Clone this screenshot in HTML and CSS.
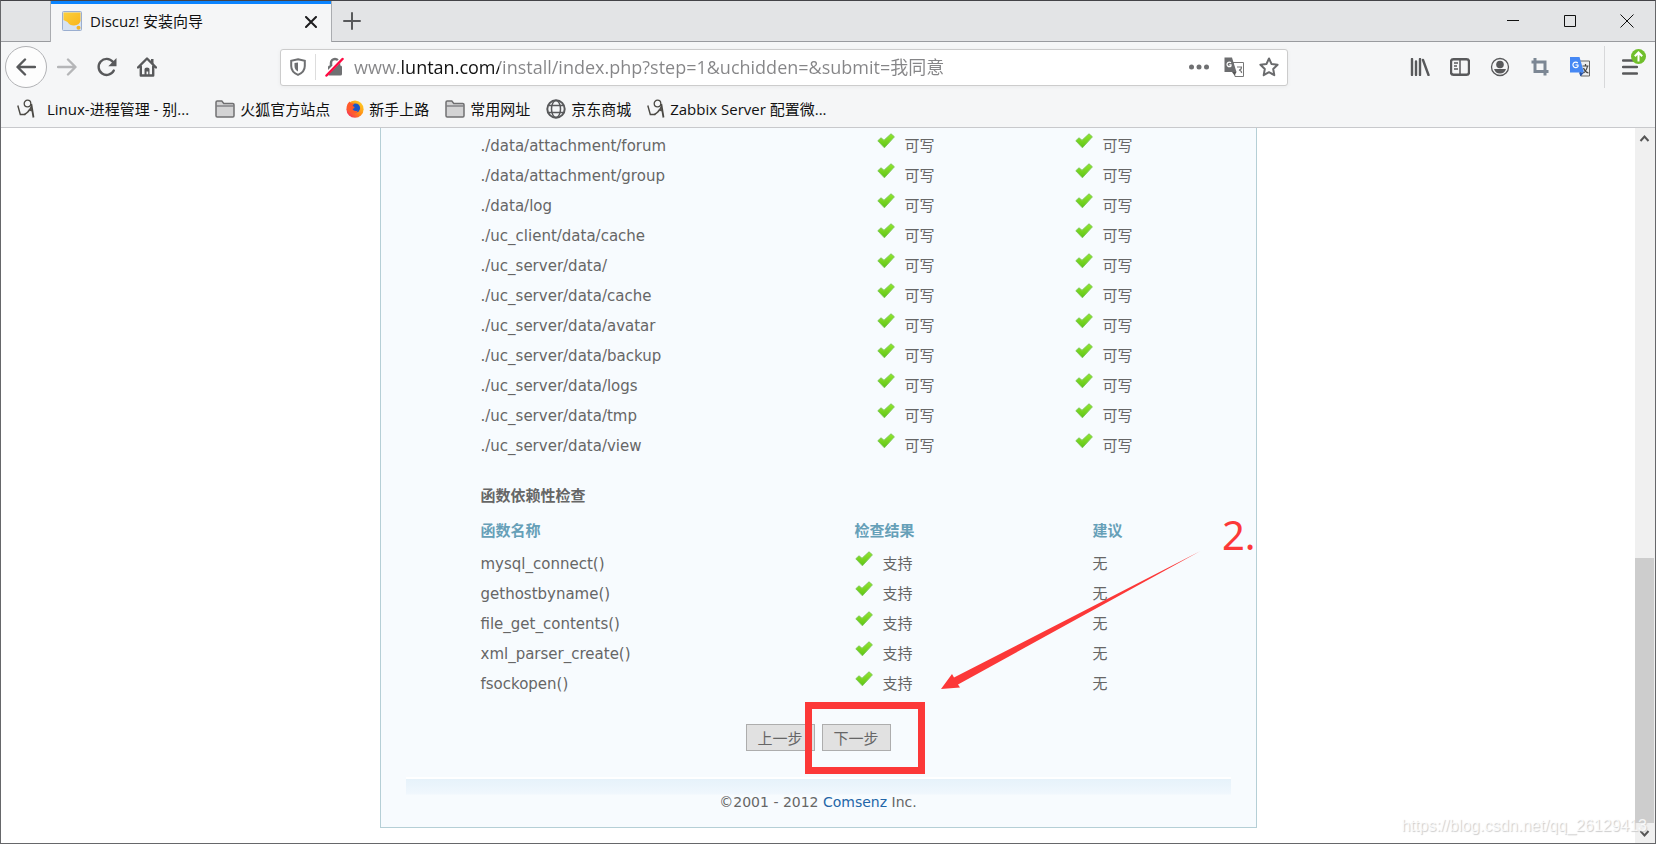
FILE: index.html
```html
<!DOCTYPE html>
<html lang="zh-CN">
<head>
<meta charset="utf-8">
<title>Discuz! 安装向导</title>
<link rel="stylesheet" href="styles.css">
</head>
<body>
<svg class="defs" width="0" height="0" aria-hidden="true">
  <defs>
    <linearGradient id="green" x1="0" y1="0" x2="0" y2="1"><stop offset="0" stop-color="#93e62c"/><stop offset="1" stop-color="#5fc418"/></linearGradient>
    <linearGradient id="gold" x1="0" y1="0" x2="1" y2="1"><stop offset="0" stop-color="#fbd03c"/><stop offset="1" stop-color="#f9b51c"/></linearGradient>
    <linearGradient id="fox" x1="1" y1="0" x2="0" y2="1"><stop offset="0" stop-color="#ffe226"/><stop offset=".5" stop-color="#ff8a16"/><stop offset="1" stop-color="#f5156c"/></linearGradient>
    <symbol id="check" viewBox="0 0 18 16"><path d="M.8 7.800 4 4.800l3 2.500L14 .8l3.400 3L7.400 14.800z" fill="url(#green)" stroke="#7fc95a" stroke-width="1" stroke-linejoin="round"/></symbol>
    <symbol id="folder" viewBox="0 0 20 18"><path d="M1 2.200Q1 1 2.200 1h4.600l2 2.500h9Q19 3.500 19 4.700v11.100Q19 17 17.800 17H2.200Q1 17 1 15.800z" fill="#d3d3d4" stroke="#707072" stroke-width="1.500"/><path d="M1.500 6h17" stroke="#707072" stroke-width="1.200"/></symbol>
    <symbol id="doodle" viewBox="0 0 18 20"><g fill="none" stroke="#4b4944"><circle cx="10.500" cy="4.500" r="3.300" stroke-width="1.300"/><path d="M.8 6.500 3.300 15.500h5" stroke-width="1.400"/><path d="M7.500 15.500Q12 13 14.500 7.500" stroke-width="1.600"/><path d="M14.300 5 16.500 18.500" stroke-width="1.800"/></g><path d="m10.500 11.500 4-3 1 4z" fill="#55534e"/></symbol>
  </defs>
</svg>
<div class="window">
  <header class="titlebar">
    <div class="tab">
      <svg width="20" height="20" viewBox="0 0 20 20"><rect x=".5" y=".5" width="19" height="19" rx="1" fill="#d6e2f2" stroke="#9aaed0"/><path d="M1.500 1.500h17V10Q17.500 14 12 14.500 7.500 14.500 5.500 11L1.500 9z" fill="url(#gold)"/><circle cx="16.500" cy="16.800" r="2" fill="#f6b426"/></svg>
      <span class="tab-title">Discuz! 安装向导</span>
      <button class="tab-close" aria-label="关闭标签页"><svg width="12" height="12" viewBox="0 0 12 12"><path d="m1 1 10 10M11 1 1 11" stroke="#1c1c1e" stroke-width="2" stroke-linecap="round"/></svg></button>
    </div>
    <button class="new-tab" aria-label="新标签页"><svg width="18" height="18" viewBox="0 0 18 18"><path d="M9 1v16M1 9h16" stroke="#58595b" stroke-width="2" stroke-linecap="round"/></svg></button>
    <div class="controls">
      <button aria-label="最小化"><svg width="14" height="14" viewBox="0 0 14 14"><path d="M1 6.500h12" stroke="#111"/></svg></button>
      <button aria-label="最大化"><svg width="14" height="14" viewBox="0 0 14 14"><path d="M1.500 1.500h11v11h-11z" fill="none" stroke="#111"/></svg></button>
      <button aria-label="关闭"><svg width="14" height="14" viewBox="0 0 14 14"><path d="m.5.500 13 13M13.500.500l-13 13" stroke="#111"/></svg></button>
    </div>
  </header>

  <nav class="toolbar" aria-label="导航">
    <button class="back" aria-label="后退"><svg width="20" height="20" viewBox="0 0 20 20"><path d="M19 10H2M9 2.500 1.500 10 9 17.500" class="ink" /></svg></button>
    <button class="tool faded" aria-label="前进"><svg width="20" height="20" viewBox="0 0 20 20"><path d="M1 10h17M11 2.500 18.500 10 11 17.500" class="ink"/></svg></button>
    <button class="tool" aria-label="刷新"><svg width="20" height="20" viewBox="0 0 20 20"><path d="M16.800 13.500A8 8 0 1 1 15.800 4.800" class="ink"/><path d="M19.500 1v8.200h-8.200z" fill="#58595b"/></svg></button>
    <button class="tool" aria-label="主页"><svg width="20" height="20" viewBox="0 0 20 20"><path d="M1 10.500 10 1.500l9 9M3.800 9.500V18.500h12.400V9.500" class="ink"/><path d="M14 2h2.500v5H14zM7.500 18v-6q0-1.500 2.500-1.500t2.500 1.500v6h-1.300v-3.500H9.500V18z" fill="#58595b"/></svg></button>
    <div class="address">
      <button class="shield" aria-label="跟踪保护"><svg width="16" height="18" viewBox="0 0 16 18"><path d="M8 1.200 14.800 2.800V8q0 6-6.800 8.800Q1.200 14 1.200 8V2.800z" fill="none" stroke="#6f7072" stroke-width="2"/><path d="M8 4.500v9Q4.500 11.500 4.500 8V5z" fill="#6f7072"/></svg></button>
      <button class="lock" aria-label="连接不安全"><svg width="20" height="20" viewBox="0 0 20 20"><path d="M6 9V6a4 4 0 0 1 8 0v3" fill="none" stroke="#707173" stroke-width="2.500"/><rect x="3" y="8.500" width="14" height="10" rx="1.500" fill="#707173"/><path d="M2 16.500 17 1.500" stroke="#fff" stroke-width="3.500"/><path d="M1.500 18.500 17.500 2" stroke="#ff0a42" stroke-width="2.500" stroke-linecap="round"/></svg></button>
      <input class="url" type="text" aria-label="网址" value="www.luntan.com/install/index.php?step=1&amp;uchidden=&amp;submit=我同意">
      <button class="address-action" aria-label="页面操作"><svg width="20" height="6" viewBox="0 0 20 6"><g fill="#6f7072"><circle cx="2.500" cy="3" r="2.500"/><circle cx="10" cy="3" r="2.500"/><circle cx="17.500" cy="3" r="2.500"/></g></svg></button>
      <button class="address-action" aria-label="翻译此页"><svg width="20" height="20" viewBox="0 0 20 20"><path d="M9 5.500h10.500v14H11z" fill="#fff" stroke="#777"/><path d="M.5.500H8L12.500 15H.5z" fill="#6c6d6f"/><path d="m8 15 4.500 0-2 3.500z" fill="#555"/><path d="M7 5.800A2.300 2.300 0 1 0 7 9V7.800H5.200" fill="none" stroke="#fff" stroke-width="1.200"/><path d="M13 10h4.500q0 3-2.500 3 3 1 2.500 3" fill="none" stroke="#777" stroke-width="1.200"/></svg></button>
      <button class="address-action" aria-label="添加书签"><svg width="20" height="20" viewBox="0 0 20 20"><path d="m10 1.500 2.600 5.600 6 .7-4.400 4.200 1.100 6.200L10 15.200l-5.300 3 1.100-6.200L1.400 7.800l6-.7z" fill="none" stroke="#6a6b6d" stroke-width="2" stroke-linejoin="round"/></svg></button>
    </div>
    <button class="tool" aria-label="我的足迹"><svg width="20" height="18" viewBox="0 0 20 18"><path d="M2 1v16M6 3.500V17M10 1v16M13 2l5.500 15" class="ink"/></svg></button>
    <button class="tool" aria-label="侧边栏"><svg width="20" height="18" viewBox="0 0 20 18"><rect x="1" y="1.200" width="18" height="15.500" rx="2.500" class="ink"/><path d="M10 2v14" stroke="#58595b" stroke-width="1.500"/><path d="M4 5h4M4 8h3M4 11h4" stroke="#58595b" stroke-width="1.300"/></svg></button>
    <button class="tool" aria-label="账户"><svg width="20" height="20" viewBox="0 0 20 20"><circle cx="10" cy="10" r="8.500" fill="none" stroke="#58595b" stroke-width="1.300"/><circle cx="10" cy="7.500" r="3.800" fill="#58595b"/><path d="M4 12h12q-1.500 4.500-6 4.500T4 12z" fill="#58595b"/></svg></button>
    <button class="tool" aria-label="截图"><svg width="20" height="20" viewBox="0 0 20 20"><path d="M5 1v13.500h13.500M1.500 5H15v13.500" fill="none" stroke="#7c8794" stroke-width="3"/></svg></button>
    <button class="tool" aria-label="翻译"><svg width="20" height="20" viewBox="0 0 20 20"><path d="M9 4h10.500v15H11z" fill="#eee" stroke="#666"/><path d="M0 0h9.500L14 15.500H0z" fill="#4688f4"/><path d="M9 15.500h5L10.500 19.500z" fill="#2552a8"/><path d="M7.800 6A2.800 2.800 0 1 0 8 9.500V8H5.500" fill="none" stroke="#fff" stroke-width="1.200"/><path d="M12.500 9h6M15.500 7v2M17.500 9q-1 5-4 7M13.500 11q1.500 4 5 5" fill="none" stroke="#444" stroke-width="1.200"/></svg></button>
    <button class="menu" aria-label="打开菜单"><svg width="16" height="16" viewBox="0 0 16 16"><path d="M1 1.500h14M1 8h14M1 14.500h14" class="ink"/></svg>
      <svg class="badge" width="15" height="15" viewBox="0 0 15 15"><circle cx="7.500" cy="7.500" r="7.500" fill="#70bf2c"/><path d="M7.500 12.500V4M3.800 7.200l3.700-3.700 3.700 3.700" fill="none" stroke="#fff" stroke-width="2"/></svg></button>
  </nav>

  <nav class="bookmarks" aria-label="书签">
    <a class="wide" href="#"><svg width="18" height="20"><use href="#doodle"/></svg>Linux-进程管理 - 别...</a>
    <a href="#"><svg width="20" height="18"><use href="#folder"/></svg>火狐官方站点</a>
    <a href="#"><svg width="18" height="18" viewBox="0 0 18 18"><circle cx="9" cy="9.200" r="8.600" fill="url(#fox)"/><circle cx="9.500" cy="8" r="4.600" fill="#1b57c8"/><path d="M.8 7Q1.500 3 3.500 1.500l1.500 2Q7 3 8 4L6.500 6Q9 6.500 8.500 8L6.500 9Q8 12 12 10.500 10 15 5.500 13 1.500 11 .8 7z" fill="#ff5a2c"/></svg>新手上路</a>
    <a href="#"><svg width="20" height="18"><use href="#folder"/></svg>常用网址</a>
    <a href="#"><svg width="20" height="20" viewBox="0 0 20 20"><g fill="none" stroke="#58595b" stroke-width="1.500"><circle cx="10" cy="10" r="8.700" stroke-width="2"/><ellipse cx="10" cy="10" rx="4.500" ry="8.500"/><path d="M2.500 6.500h15M2.500 13.500h15"/></g></svg>京东商城</a>
    <a href="#"><svg width="18" height="20"><use href="#doodle"/></svg>Zabbix Server 配置微...</a>
  </nav>

  <div class="viewport">
    <main class="page">
      <div class="container">
        <table class="files">
          <tbody>
            <tr><td>./data/attachment/forum</td><td><svg class="ok"><use href="#check"/></svg>可写</td><td><svg class="ok"><use href="#check"/></svg>可写</td></tr>
            <tr><td>./data/attachment/group</td><td><svg class="ok"><use href="#check"/></svg>可写</td><td><svg class="ok"><use href="#check"/></svg>可写</td></tr>
            <tr><td>./data/log</td><td><svg class="ok"><use href="#check"/></svg>可写</td><td><svg class="ok"><use href="#check"/></svg>可写</td></tr>
            <tr><td>./uc_client/data/cache</td><td><svg class="ok"><use href="#check"/></svg>可写</td><td><svg class="ok"><use href="#check"/></svg>可写</td></tr>
            <tr><td>./uc_server/data/</td><td><svg class="ok"><use href="#check"/></svg>可写</td><td><svg class="ok"><use href="#check"/></svg>可写</td></tr>
            <tr><td>./uc_server/data/cache</td><td><svg class="ok"><use href="#check"/></svg>可写</td><td><svg class="ok"><use href="#check"/></svg>可写</td></tr>
            <tr><td>./uc_server/data/avatar</td><td><svg class="ok"><use href="#check"/></svg>可写</td><td><svg class="ok"><use href="#check"/></svg>可写</td></tr>
            <tr><td>./uc_server/data/backup</td><td><svg class="ok"><use href="#check"/></svg>可写</td><td><svg class="ok"><use href="#check"/></svg>可写</td></tr>
            <tr><td>./uc_server/data/logs</td><td><svg class="ok"><use href="#check"/></svg>可写</td><td><svg class="ok"><use href="#check"/></svg>可写</td></tr>
            <tr><td>./uc_server/data/tmp</td><td><svg class="ok"><use href="#check"/></svg>可写</td><td><svg class="ok"><use href="#check"/></svg>可写</td></tr>
            <tr><td>./uc_server/data/view</td><td><svg class="ok"><use href="#check"/></svg>可写</td><td><svg class="ok"><use href="#check"/></svg>可写</td></tr>
          </tbody>
        </table>
        <h2>函数依赖性检查</h2>
        <table class="functions">
          <thead><tr><th>函数名称</th><th>检查结果</th><th>建议</th></tr></thead>
          <tbody>
            <tr><td>mysql_connect()</td><td><svg class="ok"><use href="#check"/></svg>支持</td><td>无</td></tr>
            <tr><td>gethostbyname()</td><td><svg class="ok"><use href="#check"/></svg>支持</td><td>无</td></tr>
            <tr><td>file_get_contents()</td><td><svg class="ok"><use href="#check"/></svg>支持</td><td>无</td></tr>
            <tr><td>xml_parser_create()</td><td><svg class="ok"><use href="#check"/></svg>支持</td><td>无</td></tr>
            <tr><td>fsockopen()</td><td><svg class="ok"><use href="#check"/></svg>支持</td><td>无</td></tr>
          </tbody>
        </table>
        <form class="actions">
          <button type="button">上一步</button>
          <button type="button">下一步</button>
        </form>
        <footer>©2001 - 2012 <a href="#">Comsenz</a> Inc.</footer>
        <span class="step">2.</span>
        <svg class="arrow" width="260" height="140" viewBox="0 0 260 140"><path d="M259.500 1 13 127.500 11 124 0 139l19-1.500-2-3z" fill="#fc3838"/></svg>
        <div class="highlight"></div>
      </div>
    </main>
    <div class="scrollbar">
      <svg width="20" height="20" viewBox="0 0 20 20"><path d="m5.500 13 4-4.500 4 4.500" fill="none" stroke="#555" stroke-width="2"/></svg>
      <div class="track"><div class="thumb"></div></div>
      <svg width="20" height="20" viewBox="0 0 20 20"><path d="m5.500 8 4 4.500 4-4.500" fill="none" stroke="#555" stroke-width="2"/></svg>
    </div>
    <span class="watermark">https://blog.csdn.net/qq_26129413</span>
  </div>
</div>
</body>
</html>
```
FILE: styles.css
```css
* { box-sizing: border-box; }
body { margin: 0; font-family: "Open Sans", "Noto Sans CJK SC", sans-serif; font-size: 15px; color: #111; }
button { border: 0; padding: 0; background: none; font: inherit; display: flex; align-items: center; justify-content: center; }
svg { display: block; flex: none; }
a { color: inherit; text-decoration: none; }
.defs { position: absolute; }
.ink { fill: none; stroke: #58595b; stroke-width: 2.400; stroke-linecap: round; stroke-linejoin: round; }

.window { height: 100vh; display: flex; flex-direction: column; border: 1px solid #66676a; border-top-color: #444348; background: #f5f6f7; overflow: hidden; }

.titlebar { flex: none; height: 41px; display: flex; background: #e3e4e6; box-shadow: inset 0 -1px #999b9f; }
.tab { width: 282px; margin-left: 49px; display: flex; align-items: center; gap: 8px; padding: 0 12px 2px 11px; background: #f5f6f7; border: solid #aaacb0; border-width: 0 1px; box-shadow: inset 0 3px #0a84ff; }
.tab-title { flex: 1; line-height: 24px; font-size: 15px; }
.tab-close { width: 16px; height: 16px; margin-top: 2px; }
.new-tab { width: 40px; padding-bottom: 2px; }
.controls { margin-left: auto; display: flex; padding-bottom: 1px; }
.controls button { width: 57px; }

.toolbar { flex: none; height: 50px; display: flex; align-items: center; padding-left: 4px; }
.back { width: 42px; height: 42px; border: 1px solid #b1b2b5; border-radius: 50%; background: #fdfdfd; }
.tool { width: 40px; height: 40px; }
.faded { opacity: .4; }
.address { flex: 1; height: 37px; display: flex; align-items: center; margin: 0 112px 0 113px; padding-right: 1px; background: #fff; border: 1px solid #ccc; border-radius: 3px; box-shadow: 0 1px 4px #0000000d; }
.shield { width: 35px; height: 26px; border-right: 1px solid #ddd; }
.lock { width: 38px; }
.url { flex: 1; min-width: 0; height: 32px; border: 0; padding: 0 0 2px; outline: 0; font: 18px "Open Sans", "Noto Sans CJK SC", sans-serif; color: #858587; background: linear-gradient(90deg, #858587 47px, #111 47px, #111 145px, #858587 145px); background-clip: text; -webkit-background-clip: text; -webkit-text-fill-color: transparent; }
.address-action { width: 35px; height: 32px; }
.menu { position: relative; width: 51px; height: 42px; margin-left: 4px; border-left: 1px solid #d7d8da; }
.badge { position: absolute; top: 3px; right: 9px; }

.bookmarks { flex: none; height: 36px; display: flex; align-items: center; gap: 16px; padding: 0 16px 2px; border-bottom: 1px solid #c8c9cc; font-size: 15px; line-height: 24px; white-space: nowrap; }
.bookmarks a { display: flex; align-items: center; gap: 5px; }
.bookmarks .wide { gap: 12px; margin-right: 10px; }

.viewport { position: relative; flex: 1; min-height: 0; display: flex; background: #fff; }
.page { flex: 1; font-family: "DejaVu Sans", "Noto Sans CJK SC", sans-serif; color: #666; }
.container { position: relative; max-width: 877px; margin: 0 auto; padding: 2px 25px 14px; background: #f7fbfe; border: 1px solid #b5cfd6; border-top: 0; }
table { width: calc(100% - 150px); margin: 0 75px; border-collapse: collapse; table-layout: fixed; }
td, th { height: 30px; padding: 0; text-align: left; line-height: 24px; }
th { color: #66a0b8; height: 36px; padding-top: 2px; }
td:first-child, .functions td:last-child { padding-top: 2px; }
.files td:nth-child(1) { width: 396px; }
.files td:nth-child(2) { width: 198px; }
.functions th:nth-child(1) { width: 374px; }
.functions th:nth-child(2) { width: 238px; }
.ok { display: inline-block; width: 18px; height: 16px; margin-right: 10px; vertical-align: 2px; }
h2 { margin: 23px 75px 3px; font-size: 15px; line-height: 26px; }
.actions { display: flex; justify-content: center; gap: 7px; padding: 26px 0; }
.actions button { width: 69px; height: 27px; background: #e1e1e1; border: 1px solid #adadad; color: #666; }
footer { padding-top: 12px; border-top: 2px solid #fff; background: linear-gradient(#e6f2fa, #f0f7fd 15px, #f7fbfe 16px); text-align: center; font-size: 14px; line-height: 22px; }
footer a { color: #2366a8; }

.step { position: absolute; top: 379px; right: 0; font: 40px/56px "Noto Sans", sans-serif; color: #fc3838; }
.arrow { position: absolute; top: 422px; left: 560px; }
.highlight { position: absolute; top: 574px; left: 424px; width: 120px; height: 72px; border: 7px solid #fc3838; }

.scrollbar { width: 20px; display: flex; flex-direction: column; background: #f0f0f0; }
.track { flex: 1; display: flex; flex-direction: column; justify-content: flex-end; padding-right: 1px; }
.thumb { height: 39.200%; background: #cdcdcd; }
.watermark { position: absolute; right: 8px; bottom: 6px; font: 16px/22px "Liberation Sans", sans-serif; color: #ffffffcc; text-shadow: 1px 1px 1px #ccc; }
```
